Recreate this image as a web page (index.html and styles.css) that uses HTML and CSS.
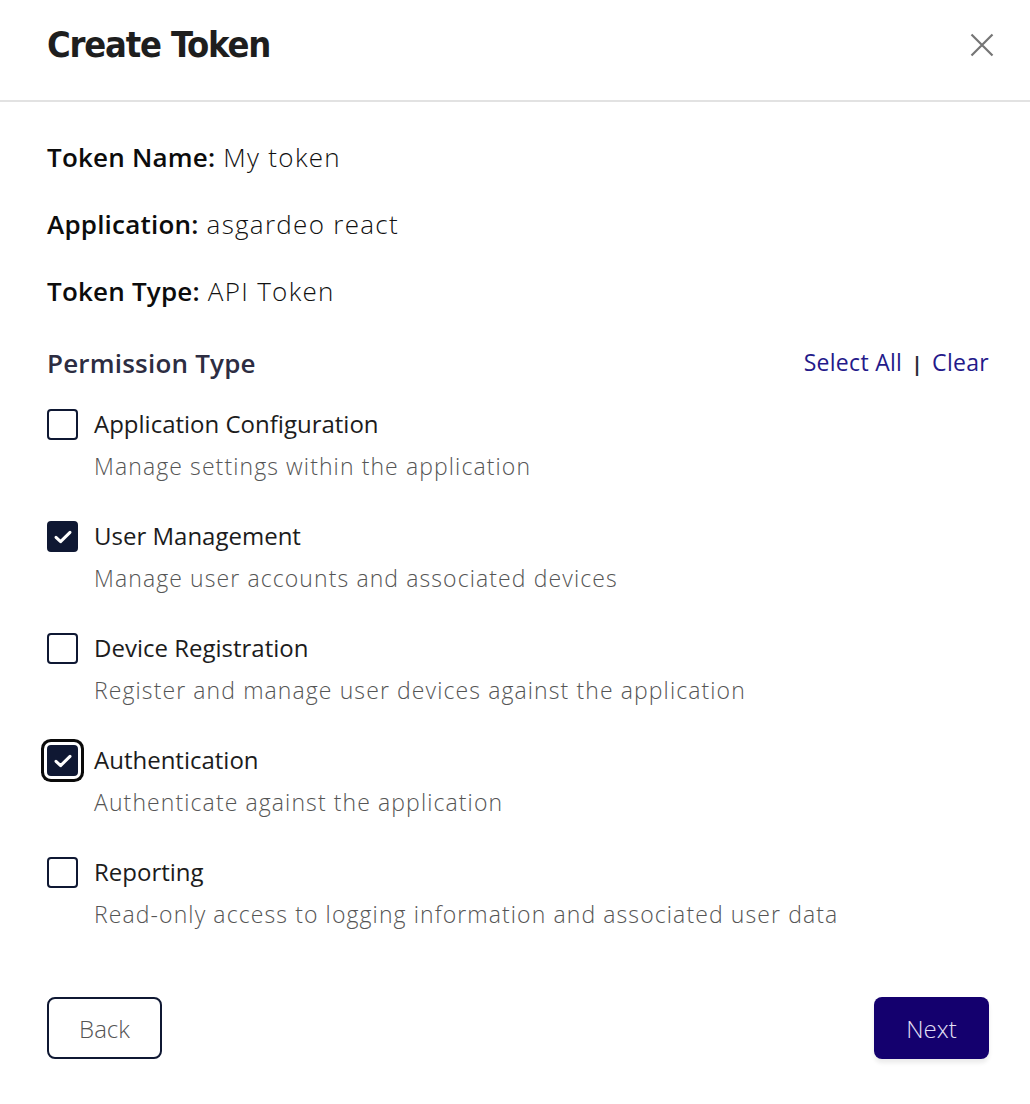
FILE: index.html
```html
<!DOCTYPE html>
<html lang="en">
<head>
<meta charset="utf-8">
<title>Create Token</title>
<link rel="stylesheet" href="styles.css">
</head>
<body>
<div class="dialog">
  <header class="dialog-header">
    <h1 class="title">Create Token</h1>
    <button class="close" aria-label="Close">
      <svg width="24" height="24" viewBox="0 0 24 24"><path d="M1.5 1.5 L22.5 22.5 M22.5 1.5 L1.5 22.5" stroke="#757575" stroke-width="2.2" fill="none"/></svg>
    </button>
  </header>
  <main class="dialog-body">
    <div class="info">
      <p class="info-row"><b>Token Name:</b> My token</p>
      <p class="info-row"><b>Application:</b> asgardeo react</p>
      <p class="info-row"><b>Token Type:</b> API Token</p>
    </div>
    <div class="perm-head">
      <h2 class="perm-title">Permission Type</h2>
      <div class="perm-actions"><a class="link">Select All</a> <span class="sep">|</span> <a class="link">Clear</a></div>
    </div>
    <ul class="perm-list">
      <li class="perm">
        <span class="box"></span>
        <div class="perm-text"><div class="perm-label">Application Configuration</div><div class="perm-desc">Manage settings within the application</div></div>
      </li>
      <li class="perm">
        <span class="box checked"><svg width="20" height="16" viewBox="0 0 20 16"><path d="M3 8.3 L7.6 12.6 L17 3.4" stroke="#fff" stroke-width="3" fill="none" stroke-linecap="round" stroke-linejoin="round"/></svg></span>
        <div class="perm-text"><div class="perm-label">User Management</div><div class="perm-desc">Manage user accounts and associated devices</div></div>
      </li>
      <li class="perm">
        <span class="box"></span>
        <div class="perm-text"><div class="perm-label">Device Registration</div><div class="perm-desc">Register and manage user devices against the application</div></div>
      </li>
      <li class="perm">
        <span class="box checked focused"><svg width="20" height="16" viewBox="0 0 20 16"><path d="M3 8.3 L7.6 12.6 L17 3.4" stroke="#fff" stroke-width="3" fill="none" stroke-linecap="round" stroke-linejoin="round"/></svg></span>
        <div class="perm-text"><div class="perm-label">Authentication</div><div class="perm-desc">Authenticate against the application</div></div>
      </li>
      <li class="perm">
        <span class="box"></span>
        <div class="perm-text"><div class="perm-label">Reporting</div><div class="perm-desc">Read-only access to logging information and associated user data</div></div>
      </li>
    </ul>
    <div class="actions">
      <button class="btn btn-back">Back</button>
      <button class="btn btn-next">Next</button>
    </div>
  </main>
</div>
</body>
</html>
```

FILE: styles.css
```css
* { box-sizing: border-box; }
html, body { margin: 0; padding: 0; background: #fff; }
body {
  font-family: "Open Sans", Lato, "Liberation Sans", sans-serif;
  color: #1c1c1c;
  width: 1030px;
  height: 1104px;
  overflow: hidden;
}
.dialog { width: 1030px; }
.dialog-header {
  height: 102px;
  border-bottom: 2px solid #e2e2e2;
  display: flex;
  align-items: center;
  justify-content: space-between;
  padding: 0 36px 10px 47px;
}
.title {
  margin: 0;
  font-family: "DejaVu Sans Condensed", "DejaVu Sans", sans-serif;
  font-stretch: condensed;
  font-weight: 700;
  font-size: 36px;
  letter-spacing: -1.2px;
  color: #1e1e1e;
  line-height: 48px;
}
.close {
  border: 0;
  background: none;
  padding: 0;
  width: 24px;
  height: 24px;
  display: flex;
}
.dialog-body {
  padding: 35px 41px 0 47px;
}
.info-row {
  margin: 0 0 27px;
  font-size: 26px;
  line-height: 40px;
  font-weight: 300;
  letter-spacing: 1.3px;
  color: #111;
}
.info-row b { font-weight: 600; color: #0c0c0c; letter-spacing: 0.2px; }
.perm-head {
  margin-top: 32px;
  display: flex;
  align-items: center;
  justify-content: space-between;
  height: 40px;
}
.perm-title {
  margin: 0;
  font-size: 26px;
  font-weight: 600;
  letter-spacing: 0.2px;
  color: #2d2d42;
  line-height: 40px;
}
.perm-actions {
  font-size: 23px;
  font-weight: 400;
  letter-spacing: 0.3px;
  color: #24198a;
  line-height: 40px;
}
.link { color: #24198a; cursor: pointer; }
.sep { color: #2a2a35; font-weight: 700; font-size: 20px; padding: 0 3px; }
.perm-list {
  list-style: none;
  margin: 26px 0 0;
  padding: 0;
  display: flex;
  flex-direction: column;
  gap: 40px;
}
.perm {
  display: flex;
  gap: 16px;
}
.box {
  width: 31px;
  height: 31px;
  flex: none;
  border: 2px solid #0f1833;
  border-radius: 4px;
  background: #fff;
  display: flex;
  align-items: center;
  justify-content: center;
}
.box.checked { background: #0f1833; }
.box.focused { box-shadow: 0 0 0 3px #fff, 0 0 0 6px #0a0a0a; }
.perm-text { display: flex; flex-direction: column; gap: 12px; }
.perm-label {
  font-size: 24px;
  line-height: 30px;
  font-weight: 400;
  color: #1c1c1c;
}
.perm-desc {
  font-size: 23px;
  line-height: 30px;
  font-weight: 300;
  letter-spacing: 1.1px;
  color: #555;
}
.actions {
  margin-top: 68px;
  display: flex;
  justify-content: space-between;
}
.btn {
  width: 115px;
  height: 62px;
  border-radius: 8px;
  font-family: inherit;
  font-size: 24px;
  font-weight: 300;
  cursor: pointer;
}
.btn-back {
  background: #fff;
  border: 2px solid #0f1833;
  color: #555;
}
.btn-next {
  background: #14006e;
  border: 0;
  color: #e4e0f7;
  box-shadow: 0 4px 4px rgba(0,0,0,0.08);
}
```
